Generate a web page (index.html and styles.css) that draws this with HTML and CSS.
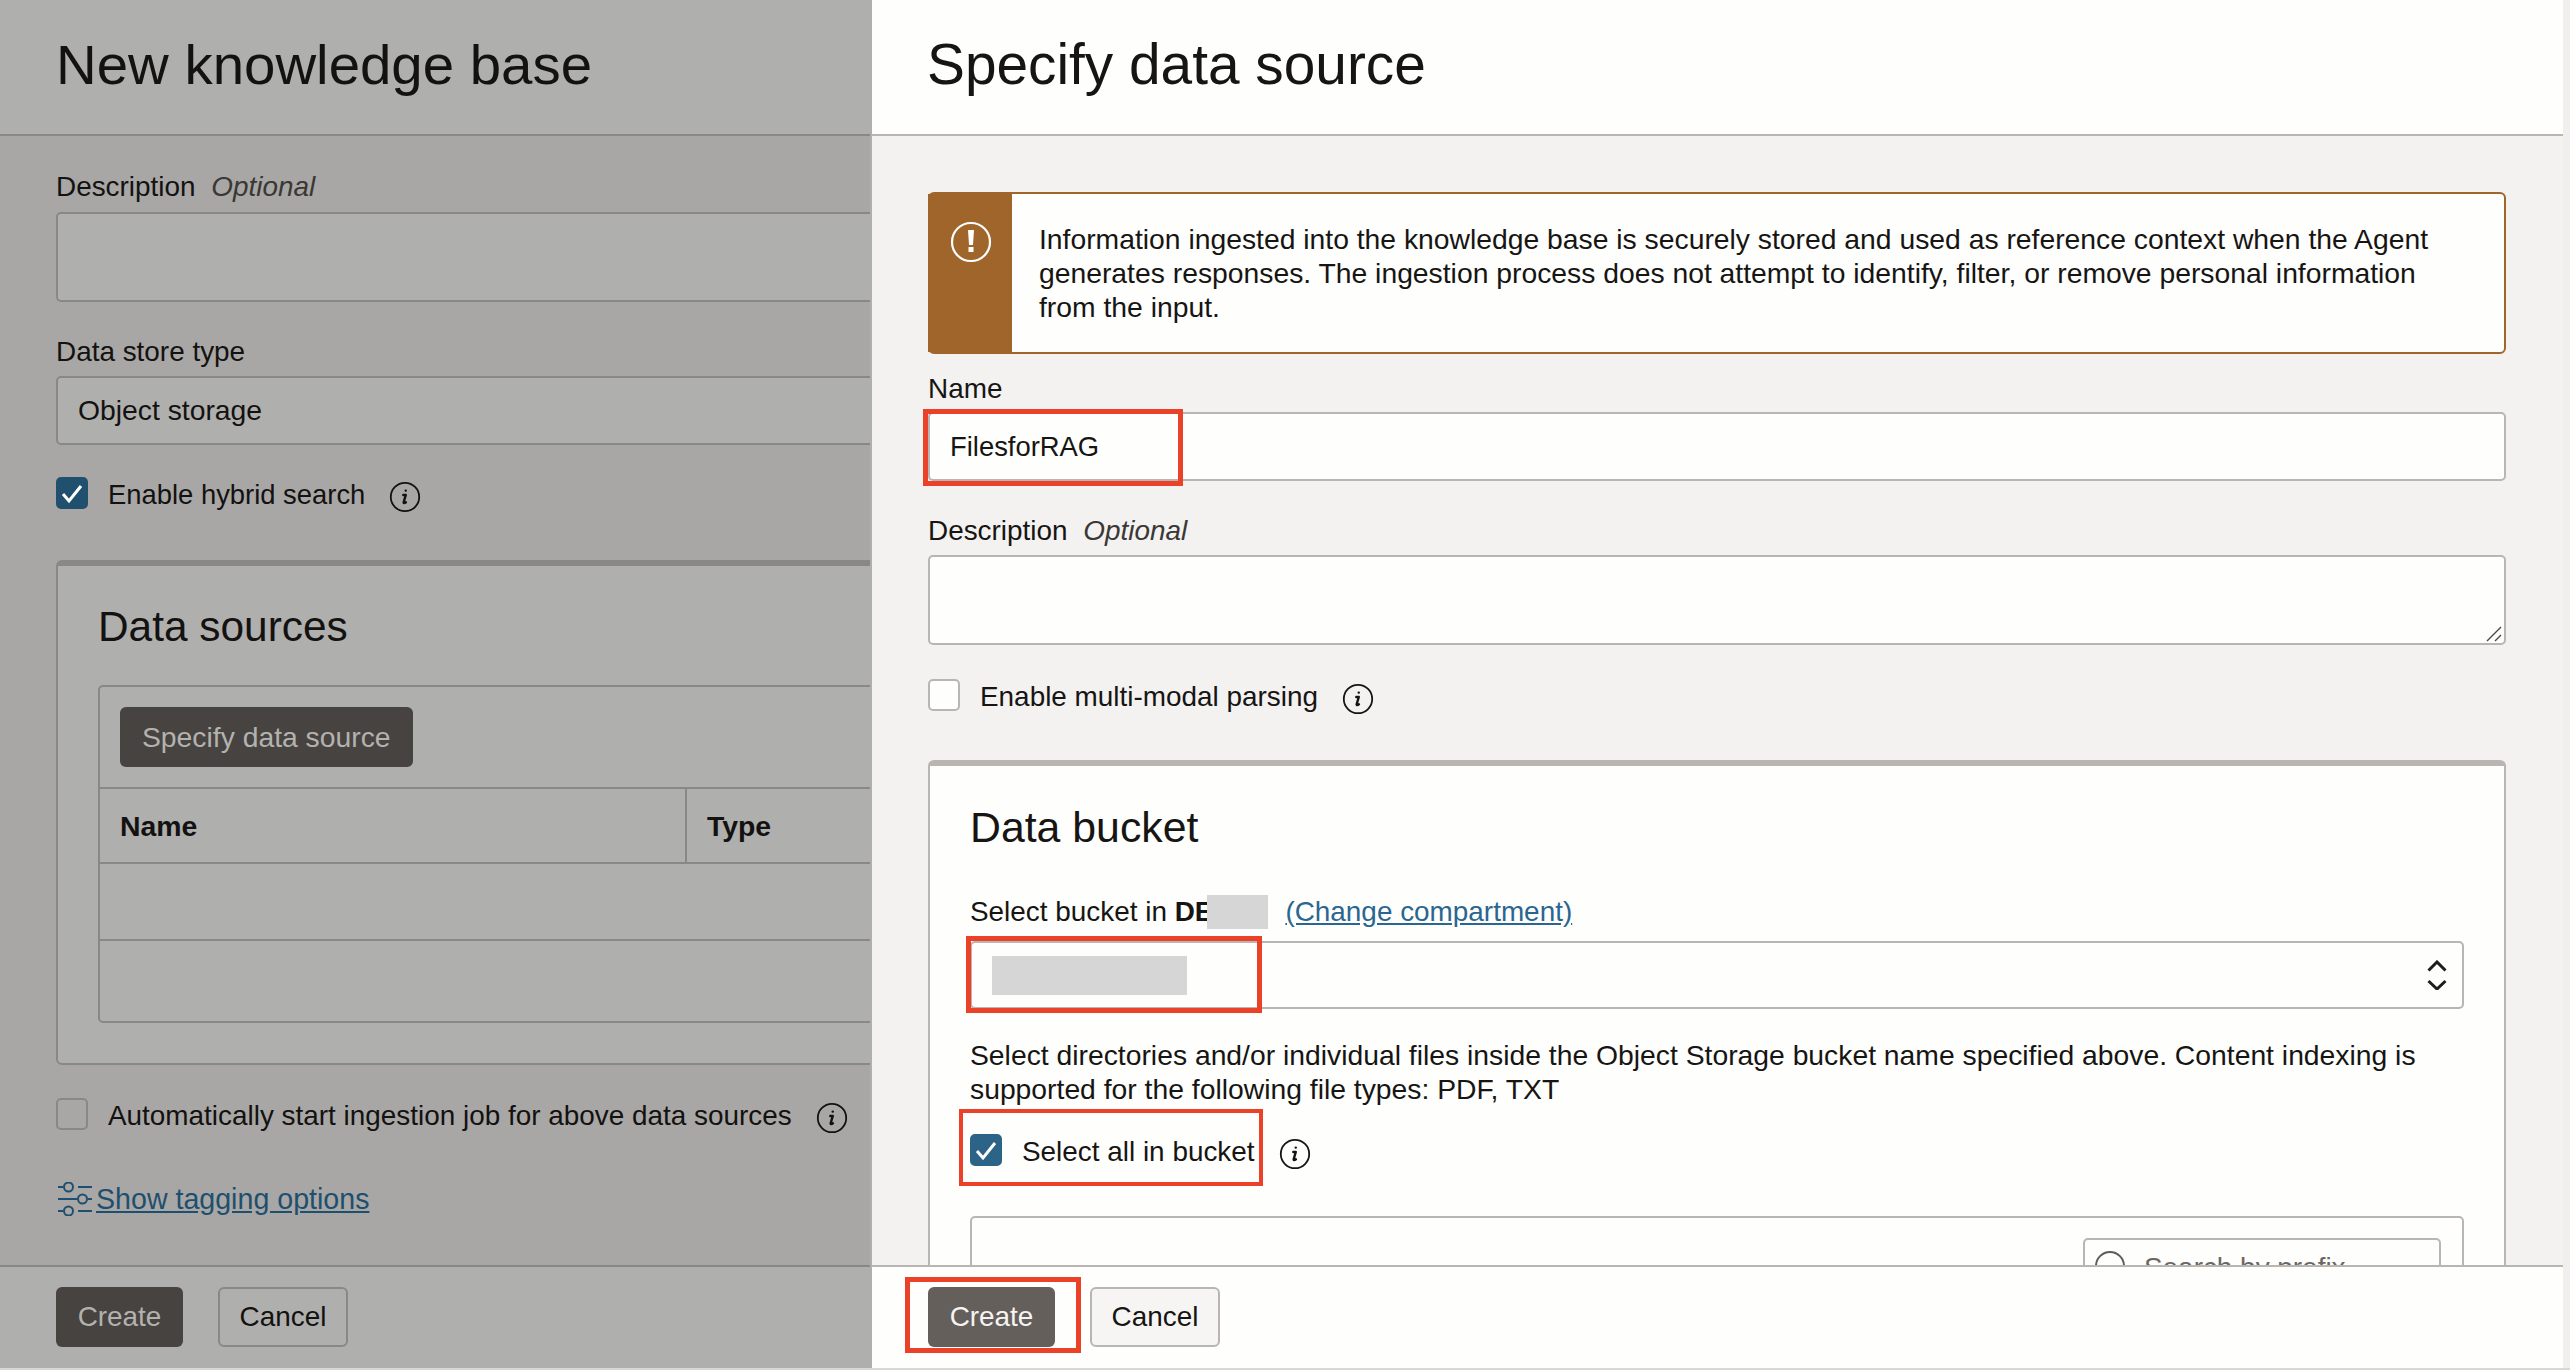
FILE: index.html
```html
<!DOCTYPE html>
<html lang="en">
<head>
<meta charset="utf-8">
<title>Specify data source</title>
<link rel="stylesheet" href="styles.css">
</head>
<body>
<div class="app">
  <section class="panel panel-back">
    <header class="head"><h1>New knowledge base</h1></header>
    <div class="body">
      <div class="label lab-first">Description <em>Optional</em></div>
      <textarea class="box area" readonly></textarea>
      <div class="label lab-next">Data store type</div>
      <input class="box text wide-text" value="Object storage" readonly>
      <div class="check-row row-hybrid">
        <span class="check on"><svg viewBox="0 0 32 32"><path d="M7 17l6 7 12-15"/></svg></span>
        <span class="check-label tight">Enable hybrid search</span>
        <svg class="info" viewBox="0 0 32 32"><circle cx="16" cy="16" r="14.200"/><path class="i" d="M16.700 9.600h.1M14.300 14h2.500l-2.100 7.200c-.3 1 .6 1.300 2.200 0"/></svg>
      </div>
      <div class="card card-sources">
        <h2>Data sources</h2>
        <div class="table">
          <div class="toolbar"><span class="btn primary wide-text">Specify data source</span></div>
          <div class="thead"><div class="th th-name">Name</div><div class="th">Type</div></div>
          <div class="tr"></div>
          <div class="tr last"></div>
        </div>
      </div>
      <div class="check-row row-auto">
        <span class="check"></span>
        <span class="check-label">Automatically start ingestion job for above data sources</span>
        <svg class="info" viewBox="0 0 32 32"><circle cx="16" cy="16" r="14.200"/><path class="i" d="M16.700 9.600h.1M14.300 14h2.500l-2.100 7.200c-.3 1 .6 1.300 2.200 0"/></svg>
      </div>
      <div class="tagging">
        <svg class="sliders" viewBox="0 0 34 34"><path d="M0 5h5M20 5h14M0 17h19M30 17h4M0 29h5M20 29h14"/><circle cx="10.500" cy="5" r="4.500"/><circle cx="24.500" cy="17" r="4.500"/><circle cx="10.500" cy="29" r="4.500"/></svg>
        <a class="link wide-link">Show tagging options</a>
      </div>
    </div>
    <footer class="foot">
      <span class="btn primary btn-create">Create</span>
      <span class="btn ghost">Cancel</span>
    </footer>
  </section>

  <section class="panel panel-front">
    <header class="head"><h1>Specify data source</h1></header>
    <div class="body">
      <div class="alert">
        <div class="alert-strip">
          <svg viewBox="0 0 42 42"><circle cx="21" cy="21" r="19"/><path class="bang" d="M18 9h6l-1 15h-4zM18.500 26h5v5h-5z"/></svg>
        </div>
        <p class="wide-text">Information ingested into the knowledge base is securely stored and used as reference context when the Agent generates responses. The ingestion process does not attempt to identify, filter, or remove personal information from the input.</p>
      </div>
      <div class="label lab-name">Name</div>
      <div class="field">
        <input class="box text tight" value="FilesforRAG" readonly>
        <span class="mark mark-name"></span>
      </div>
      <div class="label lab-next">Description <em>Optional</em></div>
      <div class="field area-wrap">
        <textarea class="box area" readonly></textarea>
        <svg class="grip" viewBox="0 0 16 16"><path d="M1 15L15 1M9 15l6-6"/></svg>
      </div>
      <div class="check-row row-modal">
        <span class="check"></span>
        <span class="check-label">Enable multi-modal parsing</span>
        <svg class="info" viewBox="0 0 32 32"><circle cx="16" cy="16" r="14.200"/><path class="i" d="M16.700 9.600h.1M14.300 14h2.500l-2.100 7.200c-.3 1 .6 1.300 2.200 0"/></svg>
      </div>
      <div class="card card-bucket">
        <h2>Data bucket</h2>
        <div class="bucket-label">
          <span>Select bucket in <b>DE</b></span><span class="patch patch-name"></span><a class="link">(Change compartment)</a>
        </div>
        <div class="field">
          <div class="box select">
            <span class="patch patch-value"></span>
            <svg class="updown" viewBox="0 0 20 30"><path d="M1.500 10.500L10 2l8.500 8.500M1.500 21l8.500 8 8.500-8"/></svg>
          </div>
          <span class="mark mark-select"></span>
        </div>
        <p class="hint wide-text">Select directories and/or individual files inside the Object Storage bucket name specified above. Content indexing is supported for the following file types: PDF, TXT</p>
        <div class="check-row row-all field">
          <span class="check on"><svg viewBox="0 0 32 32"><path d="M7 17l6 7 12-15"/></svg></span>
          <span class="check-label">Select all in bucket</span>
          <svg class="info" viewBox="0 0 32 32"><circle cx="16" cy="16" r="14.200"/><path class="i" d="M16.700 9.600h.1M14.300 14h2.500l-2.100 7.200c-.3 1 .6 1.300 2.200 0"/></svg>
          <span class="mark mark-all"></span>
        </div>
        <div class="objects">
          <div class="search">
            <svg viewBox="0 0 30 30"><circle cx="15" cy="15" r="14"/></svg>
            <span>Search by prefix</span>
          </div>
        </div>
      </div>
    </div>
    <footer class="foot">
      <span class="field">
        <span class="btn primary btn-create">Create</span>
        <span class="mark mark-create"></span>
      </span>
      <span class="btn ghost">Cancel</span>
    </footer>
  </section>
  <div class="edge"></div>
</div>
</body>
</html>
```

FILE: styles.css
```css
* { box-sizing: border-box; }
html, body { margin: 0; padding: 0; }
body {
  font-family: "Liberation Sans", Arial, sans-serif;
  font-size: 27.900px;
  line-height: 34px;
  color: #161513;
  background: #d8d8d6;
}
.wide-text { font-size: 28.300px; }
.wide-link { font-size: 28.600px; }
.tight { font-size: 27.400px; }
.app {
  display: flex;
  width: 2570px;
  height: 1368px;
  overflow: hidden;
}
.edge { width: 7px; background: #f0efee; }

/* panels */
.panel { display: flex; flex-direction: column; height: 100%; }
.panel-back {
  width: 872px;
  flex: none;
  background: #a8a7a5;
  --surface: #afafad;
  --line: #8a8885;
  --btn: #474341;
  --btn-ink: #b4b2ae;
  --link: #1f4f6e;
  --tick: #21506f;
  --ghost: #afafad;
  color: #131211;
  border-right: 2px solid #afafad;
}
.panel-front {
  width: 1691px;
  flex: none;
  background: #f3f2f1;
  --surface: #fefefd;
  --line: #b9b5b0;
  --btn: #645f5b;
  --btn-ink: #f5f4f2;
  --link: #2b6690;
  --tick: #2c6488;
  --ghost: #f6f5f4;
}
.head {
  height: 136px;
  flex: none;
  display: flex;
  align-items: center;
  padding: 0 0 4px 56px;
  background: var(--surface);
  border-bottom: 2px solid var(--line);
}
.head h1 { margin: 0; font-size: 56.400px; font-weight: 400; line-height: 70px; white-space: nowrap; }
.panel-front .head h1 { margin-left: -1px; font-size: 56.800px; }
.body { flex: 1; min-height: 0; overflow: hidden; padding-left: 56px; }
.foot {
  height: 103px;
  flex: none;
  display: flex;
  gap: 35px;
  padding: 20px 0 0 56px;
  background: var(--surface);
  border-top: 2px solid var(--line);
}

/* form controls */
.label { white-space: nowrap; }
.label em { margin-left: 8px; font-style: italic; color: #3a3835; }
.lab-first { margin-top: 34px; }
.lab-next { margin-top: 33px; }
.lab-name { margin-top: 18px; }
.box {
  display: block;
  font-family: inherit;
  line-height: inherit;
  color: inherit;
  background: var(--surface);
  border: 2px solid var(--line);
  border-radius: 5px;
  outline: none;
}
.area { width: 1578px; height: 90px; margin: 8px 0 0; padding: 0; resize: none; }
.text { width: 1578px; height: 69px; margin: 7px 0 0; padding: 0 20px; }
.panel-back .area, .panel-back .text { width: 1200px; }
.panel-front .field > .text { margin-top: 6px; }
.panel-front .text { padding: 0 20px; }
.panel-front .area { margin-top: 7px; }
.area-wrap { width: 1578px; }
.grip { position: absolute; right: 4px; bottom: 3px; width: 16px; height: 16px; }
.grip path { fill: none; stroke: #4a4744; stroke-width: 1.400; }

.check-row { display: flex; align-items: flex-start; white-space: nowrap; }
.check {
  width: 32px;
  height: 32px;
  flex: none;
  border: 2px solid var(--line);
  border-radius: 5px;
  background: var(--surface);
}
.panel-back .check { background: transparent; }
.check.on { background: var(--tick); border-color: var(--tick); }
.panel-back .check.on { background: var(--tick); }
.check svg { display: block; width: 32px; height: 32px; margin: -2px; }
.check svg path { fill: none; stroke: #fff; stroke-width: 3; }
.check-label { margin: 1px 0 0 20px; }
.info { width: 32px; height: 32px; flex: none; margin: 4px 0 0 24px; }
.info circle { fill: none; stroke: currentColor; stroke-width: 1.800; }
.info .i { fill: none; stroke: currentColor; stroke-width: 2.400; stroke-linecap: round; stroke-linejoin: round; }
.row-hybrid { margin-top: 32px; }
.row-auto { margin-top: 33px; }
.row-modal { margin-top: 34px; }

/* cards */
.card {
  width: 1578px;
  border: 2px solid var(--line);
  border-top-width: 6px;
  border-radius: 6px;
  background: var(--surface);
  padding: 0 0 0 40px;
}
.card h2 { margin: 0; font-size: 42.400px; font-weight: 400; line-height: 50px; }
.card-sources { width: 1200px; height: 505px; margin-top: 47px; padding-top: 36px; }
.card-bucket { height: 560px; margin-top: 45px; padding: 36px 40px 0; }
.card-bucket h2 { font-size: 42.800px; }

/* table on back panel */
.table { width: 1100px; margin-top: 33px; border: 2px solid var(--line); border-radius: 5px; }
.toolbar { padding: 20px; height: 100px; }
.btn {
  display: inline-flex;
  align-items: center;
  height: 60px;
  padding: 0 22px;
  border-radius: 6px;
  white-space: nowrap;
}
.primary { background: var(--btn); color: var(--btn-ink); }
.ghost {
  width: 130px;
  justify-content: center;
  padding: 0;
  background: var(--ghost);
  border: 2px solid var(--line);
}
.btn-create { width: 127px; justify-content: center; padding: 0; }
.thead { display: flex; height: 77px; border-top: 2px solid var(--line); border-bottom: 2px solid var(--line); }
.th { display: flex; align-items: center; padding-left: 20px; font-weight: 700; font-size: 28.400px; }
.th-name { width: 587px; border-right: 2px solid var(--line); }
.tr { height: 77px; border-bottom: 2px solid var(--line); }
.tr.last { height: 80px; border-bottom: 0; }
.tagging { display: flex; align-items: center; margin-top: 48px; padding-left: 2px; }
.sliders { width: 34px; height: 34px; flex: none; margin-right: 4px; }
.sliders path, .sliders circle { fill: none; stroke: var(--link); stroke-width: 2; }
.link { color: var(--link); text-decoration: underline; white-space: nowrap; }

/* alert */
.alert {
  display: flex;
  width: 1578px;
  height: 162px;
  margin-top: 56px;
  background: var(--surface);
  border: 2px solid #a0652a;
  border-radius: 6px;
}
.alert-strip { width: 84px; flex: none; margin-left: -2px; padding: 27px 0 0 22px; background: #a0652a; }
.alert-strip svg { display: block; width: 42px; height: 42px; }
.alert-strip circle { fill: none; stroke: #fff; stroke-width: 2.200; }
.alert-strip .bang { fill: #fff; }
.alert p { margin: 0; padding: 28px 44px 0 27px; }

/* bucket */
.bucket-label { display: flex; align-items: center; margin-top: 43px; height: 34px; white-space: nowrap; }
.patch { display: block; background: #d6d6d6; }
.patch-name { width: 61px; height: 34px; margin-left: -6px; }
.bucket-label .link { margin-left: 17px; }
.select {
  display: flex;
  align-items: center;
  justify-content: space-between;
  width: 1494px;
  height: 68px;
  padding: 0 15px 0 20px;
}
.bucket-label + .field { margin-top: 12px; }
.patch-value { width: 195px; height: 39px; }
.updown { width: 20px; height: 30px; flex: none; }
.updown path { fill: none; stroke: #1f1d1b; stroke-width: 3; }
.hint { margin: 29px 0 0; width: 1494px; }
.row-all { margin-top: 28px; }
.objects {
  display: flex;
  justify-content: flex-end;
  width: 1494px;
  height: 200px;
  margin-top: 46px;
  padding: 20px 21px 0 0;
  border: 2px solid var(--line);
  border-radius: 5px;
}
.search {
  display: flex;
  align-items: flex-start;
  width: 358px;
  height: 70px;
  padding: 11px 0 0 10px;
  border: 2px solid var(--line);
  border-radius: 5px;
  color: #6b6763;
}
.search svg { width: 30px; height: 30px; flex: none; margin-right: 19px; }
.search circle { fill: none; stroke: #5f5b57; stroke-width: 2; }

/* red annotations laid over the form */
.field { position: relative; display: block; }
.foot .field { display: inline-flex; }
.check-row.field { display: flex; }
.mark { position: absolute; border: 5px solid #eb4128; pointer-events: none; }
.mark-name { left: -5px; top: -3px; width: 260px; height: 77px; }
.mark-select { left: -4px; top: -5px; width: 296px; height: 77px; }
.mark-all { left: -11px; top: -25px; width: 304px; height: 77px; border-width: 4px; }
.mark-create { left: -23px; top: -10px; width: 176px; height: 76px; }
```
